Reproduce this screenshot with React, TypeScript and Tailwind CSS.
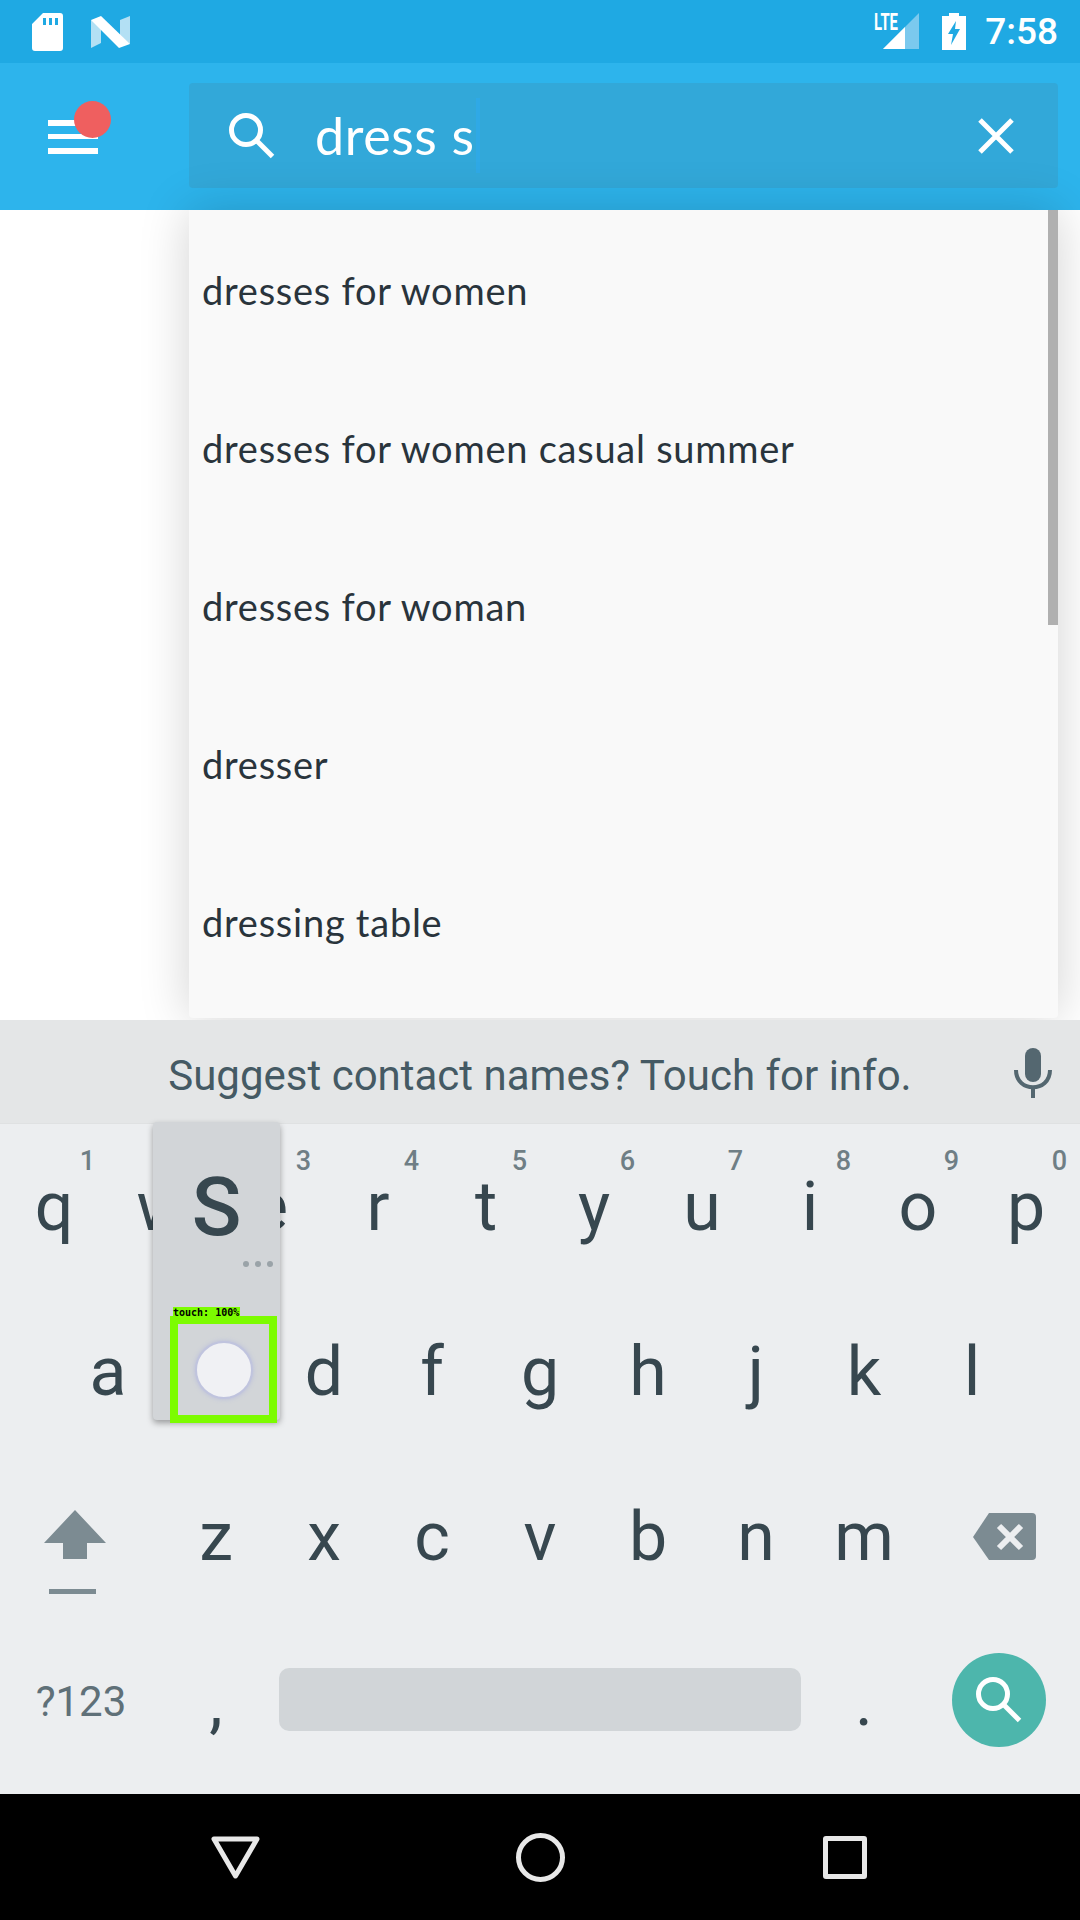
const row1: [string, string][] = [["q","1"],["w","2"],["e","3"],["r","4"],["t","5"],["y","6"],["u","7"],["i","8"],["o","9"],["p","0"]];
const row2 = ["a","s","d","f","g","h","j","k","l"];
const row3 = ["z","x","c","v","b","n","m"];
const items = ["dresses for women","dresses for women casual summer","dresses for woman","dresser","dressing table"];

function Letter({ c }: { c: string }) {
  return <span className="text-[68px] leading-none text-[#37474f]">{c}</span>;
}

function Mag({ className, sw }: { className: string; sw: number }) {
  return (
    <svg viewBox="0 0 46 46" className={className} fill="none" stroke="#fff" strokeWidth={sw}>
      <circle cx="17" cy="17" r="14.5" />
      <path d="M27.5 27.5 L43.5 43.5" />
    </svg>
  );
}

export default function App() {
  return (
    <div className="relative flex h-[1920px] w-[1080px] flex-col overflow-hidden bg-white font-['Roboto',sans-serif]">
      {/* status bar */}
      <div className="flex h-[63px] shrink-0 items-center bg-[#1fa9e3] pl-[32px] pr-[22px]">
        <svg viewBox="0 0 31 38" className="h-[38px] w-[31px]" fill="#fff">
          <path fillRule="evenodd" d="M11 0H28a3 3 0 0 1 3 3V35a3 3 0 0 1-3 3H3a3 3 0 0 1-3-3V11ZM11 5v7h3V5ZM17 5v7h3V5ZM23 5v7h3V5Z" />
        </svg>
        <svg viewBox="0 0 39 32" className="ml-[28px] h-[32px] w-[39px]">
          <path d="M0 4 L10 8 V27 L0 32Z M29 4 L39 0 V28 L29 24Z" fill="#b3e0f4" />
          <path d="M0 4 L10 0 L39 28 L28 32 Z" fill="#fff" />
        </svg>
        <div className="relative ml-auto h-[38px] w-[46px]">
          <span className="absolute left-0 top-[-1px] origin-top-left scale-x-[0.62] font-['Roboto',sans-serif] text-[24px] font-bold leading-[20px] text-white">LTE</span>
          <svg viewBox="0 0 36 36" className="absolute left-[9px] top-0 h-[36px] w-[36px]">
            <path d="M36 0V36H0Z" fill="#7bc9ee" />
            <path d="M22 14V36H0Z" fill="#fff" />
          </svg>
        </div>
        <svg viewBox="0 0 24 37" className="ml-[22px] h-[37px] w-[24px]">
          <path fillRule="evenodd" fill="#fff" d="M7 0H17V3H24V37H0V3H7ZM14 8 L6 21 H11 L9 32 L18 16 H13 Z" />
        </svg>
        <span className="ml-[19px] text-[37px] font-medium leading-none text-white">7:58</span>
      </div>

      {/* app bar */}
      <div className="flex h-[147px] shrink-0 items-center bg-[#2db4ec] pl-[48px] pr-[22px]">
        <div className="relative flex h-[34px] w-[50px] flex-col justify-between">
          <div className="h-[6px] bg-white" />
          <div className="h-[5px] bg-white" />
          <div className="h-[6px] bg-white" />
          <div className="absolute left-[26px] top-[-19px] h-[37px] w-[37px] rounded-full bg-[#ef5f5f]" />
        </div>
        <div className="mb-[2px] ml-[91px] flex h-[105px] flex-1 items-center rounded-[4px] bg-[#32a8d9] pl-[40px] pr-[44px]">
          <Mag className="h-[46px] w-[46px]" sw={5} />
          <span className="mb-[2px] ml-[40px] font-['Lato',sans-serif] text-[52px] font-normal leading-none tracking-[0.6px] text-white">dress s</span>
          <div className="ml-px h-[75px] w-[4px] bg-[#2fa9e6]" />
          <svg viewBox="0 0 36 36" className="ml-auto h-[36px] w-[36px]" stroke="#fff" strokeWidth="5">
            <path d="M2 2 L34 34 M34 2 L2 34" />
          </svg>
        </div>
      </div>

      {/* results */}
      <div className="flex h-[810px] shrink-0 pl-[189px] pr-[22px]">
        <div className="relative z-10 flex h-[808px] flex-1 flex-col overflow-hidden rounded-b-[4px] bg-[#f9f9f9] pl-[13px] pt-px shadow-[0_0_50px_rgba(0,0,0,0.18)]">
          {items.map((t) => (
            <div key={t} className="flex h-[158px] shrink-0 items-center font-['Lato',sans-serif] text-[38px] leading-none tracking-[0.75px] text-[#29343c]">{t}</div>
          ))}
          <div className="absolute right-0 top-0 h-[415px] w-[10px] bg-[#b0b0b0]" />
        </div>
      </div>

      {/* suggestion strip */}
      <div className="relative z-20 flex h-[104px] shrink-0 items-center justify-center border-b border-[#dfe1e2] bg-[#e4e6e7]">
        <span className="mt-[8px] text-[42px] leading-none text-[#455a64]">Suggest contact names? Touch for info.</span>
        <svg viewBox="0 0 38 50" className="absolute left-[1014px] top-[28px] h-[50px] w-[38px]">
          <rect x="11" y="0" width="16" height="34" rx="8" fill="#546770" />
          <path d="M2 22 C2 45 36 45 36 22" fill="none" stroke="#546770" strokeWidth="4" />
          <path d="M19 38V50" stroke="#546770" strokeWidth="4" />
        </svg>
      </div>

      {/* keyboard */}
      <div className="relative z-20 flex h-[670px] shrink-0 flex-col bg-[#eceef0] font-['Roboto',sans-serif]">
        <div className="flex h-[165px]">
          {row1.map(([c, n]) => (
            <div key={c} className="relative flex w-[108px] items-center justify-center">
              <Letter c={c} />
              <span className="absolute right-[13px] top-[24px] text-[27px] font-medium leading-none text-[#6f7e85]">{n}</span>
            </div>
          ))}
        </div>
        <div className="flex h-[165px] px-[54px]">
          {row2.map((c) => (
            <div key={c} className="flex w-[108px] items-center justify-center"><Letter c={c} /></div>
          ))}
        </div>
        <div className="flex h-[165px]">
          <div className="relative w-[162px]">
            <svg viewBox="0 0 62 49" className="absolute left-[44px] top-[56px] h-[49px] w-[62px]" fill="#7c8b92">
              <path d="M31 0 L62 33 H43 V49 H19 V33 H0Z" />
            </svg>
            <div className="absolute left-[49px] top-[135px] h-[5px] w-[47px] bg-[#7c8b92]" />
          </div>
          {row3.map((c) => (
            <div key={c} className="flex w-[108px] items-center justify-center"><Letter c={c} /></div>
          ))}
          <div className="flex w-[162px] items-center pl-[55px]">
            <svg viewBox="0 0 63 47" className="h-[47px] w-[63px]">
              <path d="M16 0H59a4 4 0 0 1 4 4V43a4 4 0 0 1-4 4H16L0 24Z" fill="#7c8b92" />
              <path d="M26 13L48 35M48 13L26 35" stroke="#eceef0" strokeWidth="6" />
            </svg>
          </div>
        </div>
        <div className="flex h-[165px]">
          <div className="flex w-[162px] items-center justify-center text-[42px] text-[#5f7078]">?123</div>
          <div className="flex w-[108px] items-center justify-center"><Letter c="," /></div>
          <div className="flex w-[540px] items-center justify-center px-[9px] pb-[4px]">
            <div className="h-[63px] w-full rounded-[10px] bg-[#d1d5d8]" />
          </div>
          <div className="flex w-[108px] items-center justify-center"><Letter c="." /></div>
          <div className="flex w-[162px] items-center justify-center pb-[4px]">
            <div className="flex h-[94px] w-[94px] items-center justify-center rounded-full bg-[#4db6ac]">
              <Mag className="h-[46px] w-[46px]" sw={5} />
            </div>
          </div>
        </div>

        {/* key popup */}
        <div className="absolute left-[153px] top-[-2px] flex h-[298px] w-[127px] flex-col items-center rounded-[4px] bg-[#d2d5d8] pt-[44px] shadow-[0_3px_6px_rgba(0,0,0,0.35)]">
          <span className="text-[82px] font-medium leading-none text-[#37474f]">S</span>
          <div className="mt-[13px] flex w-full justify-end gap-[6px] pr-[7px]">
            <div className="h-[6px] w-[6px] rounded-full bg-[#9aa3a8]" />
            <div className="h-[6px] w-[6px] rounded-full bg-[#9aa3a8]" />
            <div className="h-[6px] w-[6px] rounded-full bg-[#9aa3a8]" />
          </div>
        </div>
        {/* detection overlay */}
        <div className="absolute left-[170px] top-[192px] flex h-[107px] w-[107px] items-center justify-center border-[8px] border-[#7cfc00]">
          <div className="h-[58px] w-[58px] rounded-full border-2 border-[#c0c4de] bg-[#f0f1f4] shadow-[0_0_5px_#b8bddc]" />
        </div>
        <div className="absolute left-[173px] top-[183px] h-[11px] w-[67px] bg-[#7cfc00] font-['DejaVu_Sans_Mono',monospace] text-[10px] font-bold leading-[11px] text-black whitespace-pre">touch: 100%</div>
      </div>

      {/* nav bar */}
      <div className="flex h-[126px] shrink-0 items-center bg-black pl-[211px]">
        <svg viewBox="0 0 49 43" className="h-[43px] w-[49px]" fill="none" stroke="#e8e8e8" strokeWidth="5" strokeLinejoin="round">
          <path d="M3 3 H46 L24.5 40Z" />
        </svg>
        <div className="ml-[256px] h-[49px] w-[49px] rounded-full border-[5px] border-[#e8e8e8]" />
        <div className="ml-[258px] h-[43px] w-[44px] rounded-[3px] border-[5px] border-[#e8e8e8]" />
      </div>
    </div>
  );
}
